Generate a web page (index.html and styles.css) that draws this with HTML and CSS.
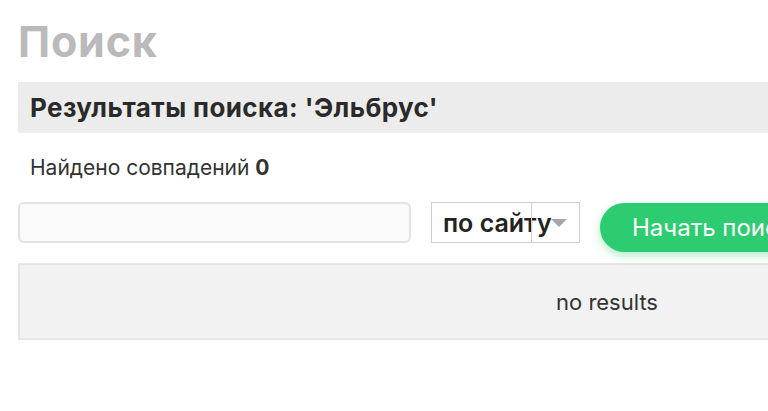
FILE: index.html
```html
<!DOCTYPE html>
<html lang="ru">
<head>
  <meta charset="UTF-8">
  <title>Поиск</title>
  <link rel="stylesheet" href="styles.css">
</head>
<body>
  <div class="page">
    <h1 class="page-title">Поиск</h1>

    <div class="results-head">Результаты поиска: 'Эльбрус'</div>

    <p class="found">Найдено совпадений <strong>0</strong></p>

    <form class="search-form">
      <input class="search-input" type="text">
      <div class="search-where">
        <span class="where-text">по сайту</span>
        <span class="where-arrow"></span>
      </div>
      <button class="search-btn" type="button">Начать поиск</button>
    </form>

    <div class="results-box">no results</div>
  </div>
</body>
</html>
```

FILE: styles.css
```css
html, body {
  margin: 0;
  padding: 0;
  overflow: hidden;
  background: #fff;
}
body {
  font-family: Inter, 'Noto Sans', Arial, sans-serif;
  color: #222;
}
.page {
  width: 1178px;
  padding: 18px 0 0 18px;
}
.page-title {
  margin: 0;
  font-size: 43px;
  font-weight: 700;
  color: #bababa;
  line-height: 46px;
  letter-spacing: 0.8px;
}
.results-head {
  margin-top: 18px;
  height: 51px;
  line-height: 51px;
  background: #ececec;
  padding-left: 12px;
  font-size: 26px;
  font-weight: 700;
  letter-spacing: 0.4px;
  color: #2a2a2a;
}
.found {
  margin: 23px 0 0 12px;
  font-size: 21px;
  line-height: 24px;
  color: #333;
}
.found strong {
  font-weight: 700;
}
.search-form {
  display: flex;
  align-items: flex-start;
  margin-top: 22px;
}
.search-input {
  width: 393px;
  height: 41px;
  box-sizing: border-box;
  border: 2px solid #e2e2e2;
  border-radius: 6px;
  background: #fafafa;
  margin: 0;
}
.search-where {
  position: relative;
  margin-left: 20px;
  width: 149px;
  height: 41px;
  box-sizing: border-box;
  border: 1px solid #cfcfcf;
  display: flex;
  align-items: center;
  padding-left: 11px;
  font-size: 25px;
  font-weight: 600;
  color: #222;
}
.search-where::after {
  content: '';
  position: absolute;
  left: 99px;
  top: 0;
  bottom: 0;
  border-left: 1px solid #cfcfcf;
}
.where-arrow {
  position: absolute;
  left: 119px;
  top: 16px;
  width: 0;
  height: 0;
  border-left: 8px solid transparent;
  border-right: 8px solid transparent;
  border-top: 8px solid #a5a5b0;
}
.search-btn {
  margin: 1px 0 0 20px;
  height: 49px;
  padding: 0 32px;
  border: none;
  border-radius: 25px;
  background: #2ecc71;
  color: #fff;
  font-family: inherit;
  font-size: 24px;
  box-shadow: 0 4px 10px rgba(46, 204, 113, 0.35);
}
.results-box {
  margin-top: 11px;
  height: 77px;
  box-sizing: border-box;
  border: 2px solid #e6e6e6;
  background: #f2f2f2;
  display: flex;
  align-items: center;
  justify-content: center;
  font-size: 22px;
  color: #333;
}
```
